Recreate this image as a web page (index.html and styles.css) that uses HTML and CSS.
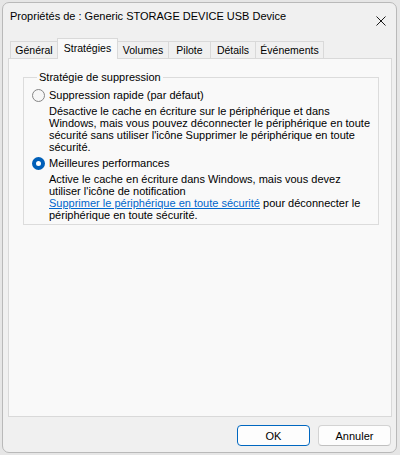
FILE: index.html
```html
<!DOCTYPE html>
<html lang="fr">
<head>
<meta charset="utf-8">
<title>Propriétés</title>
<link rel="stylesheet" href="styles.css">
</head>
<body>
<div class="window">
  <div class="titlebar">
    <span class="title">Propriétés de : Generic STORAGE DEVICE USB Device</span>
    <svg class="close" width="10" height="10" viewBox="0 0 10 10"><path d="M0.5 0.5 L9.5 9.5 M9.5 0.5 L0.5 9.5" stroke="#1a1a1a" stroke-width="1" fill="none"/></svg>
  </div>
  <div class="tabs">
    <div class="tab t1">Général</div>
    <div class="tab t2 active">Stratégies</div>
    <div class="tab t3">Volumes</div>
    <div class="tab t4">Pilote</div>
    <div class="tab t5">Détails</div>
    <div class="tab t6">Événements</div>
  </div>
  <div class="panel">
    <fieldset class="group">
      <legend>Stratégie de suppression</legend>
      <div class="option">
        <span class="radio"></span>
        <span class="label">Suppression rapide (par défaut)</span>
      </div>
      <p class="desc">Désactive le cache en écriture sur le périphérique et dans<br>Windows, mais vous pouvez déconnecter le périphérique en toute<br>sécurité sans utiliser l'icône Supprimer le périphérique en toute<br>sécurité.</p>
      <div class="option">
        <span class="radio checked"></span>
        <span class="label">Meilleures performances</span>
      </div>
      <p class="desc last">Active le cache en écriture dans Windows, mais vous devez<br>utiliser l'icône de notification<br><a class="link" href="#">Supprimer le périphérique en toute sécurité</a> pour déconnecter le<br>périphérique en toute sécurité.</p>
    </fieldset>
  </div>
  <div class="buttons">
    <button class="btn primary">OK</button>
    <button class="btn">Annuler</button>
  </div>
</div>
</body>
</html>
```
FILE: styles.css
```css
html, body {
  margin: 0;
  padding: 0;
}
body {
  background: #e6e6e6;
  font-family: "Liberation Sans", Arial, sans-serif;
  font-size: 11px;
  color: #000;
  padding: 2px 3px 2px 2px;
}
.window {
  box-sizing: border-box;
  width: 395px;
  height: 451px;
  background: #f0f0f0;
  border: 1px solid #b9b9b9;
  border-radius: 7px;
  padding: 0 5px;
}
.titlebar {
  height: 35px;
  display: flex;
  align-items: flex-start;
  justify-content: space-between;
  padding: 5px 5px 0 2px;
  box-sizing: border-box;
}
.title {
  font-size: 11px;
  line-height: 16px;
}
.close {
  margin-top: 8px;
}
.tabs {
  display: flex;
  align-items: flex-end;
  margin-left: 2px;
  height: 20px;
}
.tab {
  box-sizing: border-box;
  height: 17px;
  border: 1px solid #d9d9d9;
  border-bottom: none;
  margin-left: -1px;
  background: #f0f0f0;
  text-align: center;
  line-height: 16px;
  font-size: 10.5px;
  white-space: nowrap;
}
.t1 { width: 48px; margin-left: 0; }
.t2 { width: 61px; }
.t3 { width: 52px; }
.t4 { width: 43px; }
.t5 { width: 46px; }
.t6 { width: 69px; }
.tab.active {
  height: 21px;
  margin-bottom: -1px;
  background: #f9f9f9;
  position: relative;
  z-index: 1;
  line-height: 18px;
}
.panel {
  box-sizing: border-box;
  width: 384px;
  height: 359px;
  background: #f9f9f9;
  border: 1px solid #d9d9d9;
  padding: 12px 12px 0 14px;
}
.group {
  margin: 0;
  border: 1px solid #dcdcdc;
  padding: 6px 8px 3px 8px;
  min-width: 0;
}
.group legend {
  padding: 0 2px;
  margin-left: 5px;
  line-height: 12px;
}
.option {
  display: flex;
  align-items: center;
  height: 13px;
  gap: 4px;
}
.radio {
  box-sizing: border-box;
  width: 13px;
  height: 13px;
  border-radius: 50%;
  border: 1px solid #858585;
  background: #f6f6f6;
  flex: none;
}
.radio.checked {
  border: 4px solid #005fb8;
  background: #fff;
}
.label {
  line-height: 13px;
}
.desc {
  margin: 3px 0 4px 17px;
  line-height: 12px;
  white-space: nowrap;
}
.desc.last {
  margin-bottom: 0;
}
.link {
  color: #0066cc;
  text-decoration: underline;
}
.buttons {
  display: flex;
  justify-content: flex-end;
  gap: 8px;
  margin-top: 8px;
}
.btn {
  box-sizing: border-box;
  width: 73px;
  height: 21px;
  font-family: inherit;
  font-size: 11px;
  color: #000;
  background: #fdfdfd;
  border: 1px solid #d3d3d3;
  border-bottom-color: #c0c0c0;
  border-radius: 4px;
  padding: 0;
}
.btn.primary {
  border: 1px solid #0067c0;
}
```
